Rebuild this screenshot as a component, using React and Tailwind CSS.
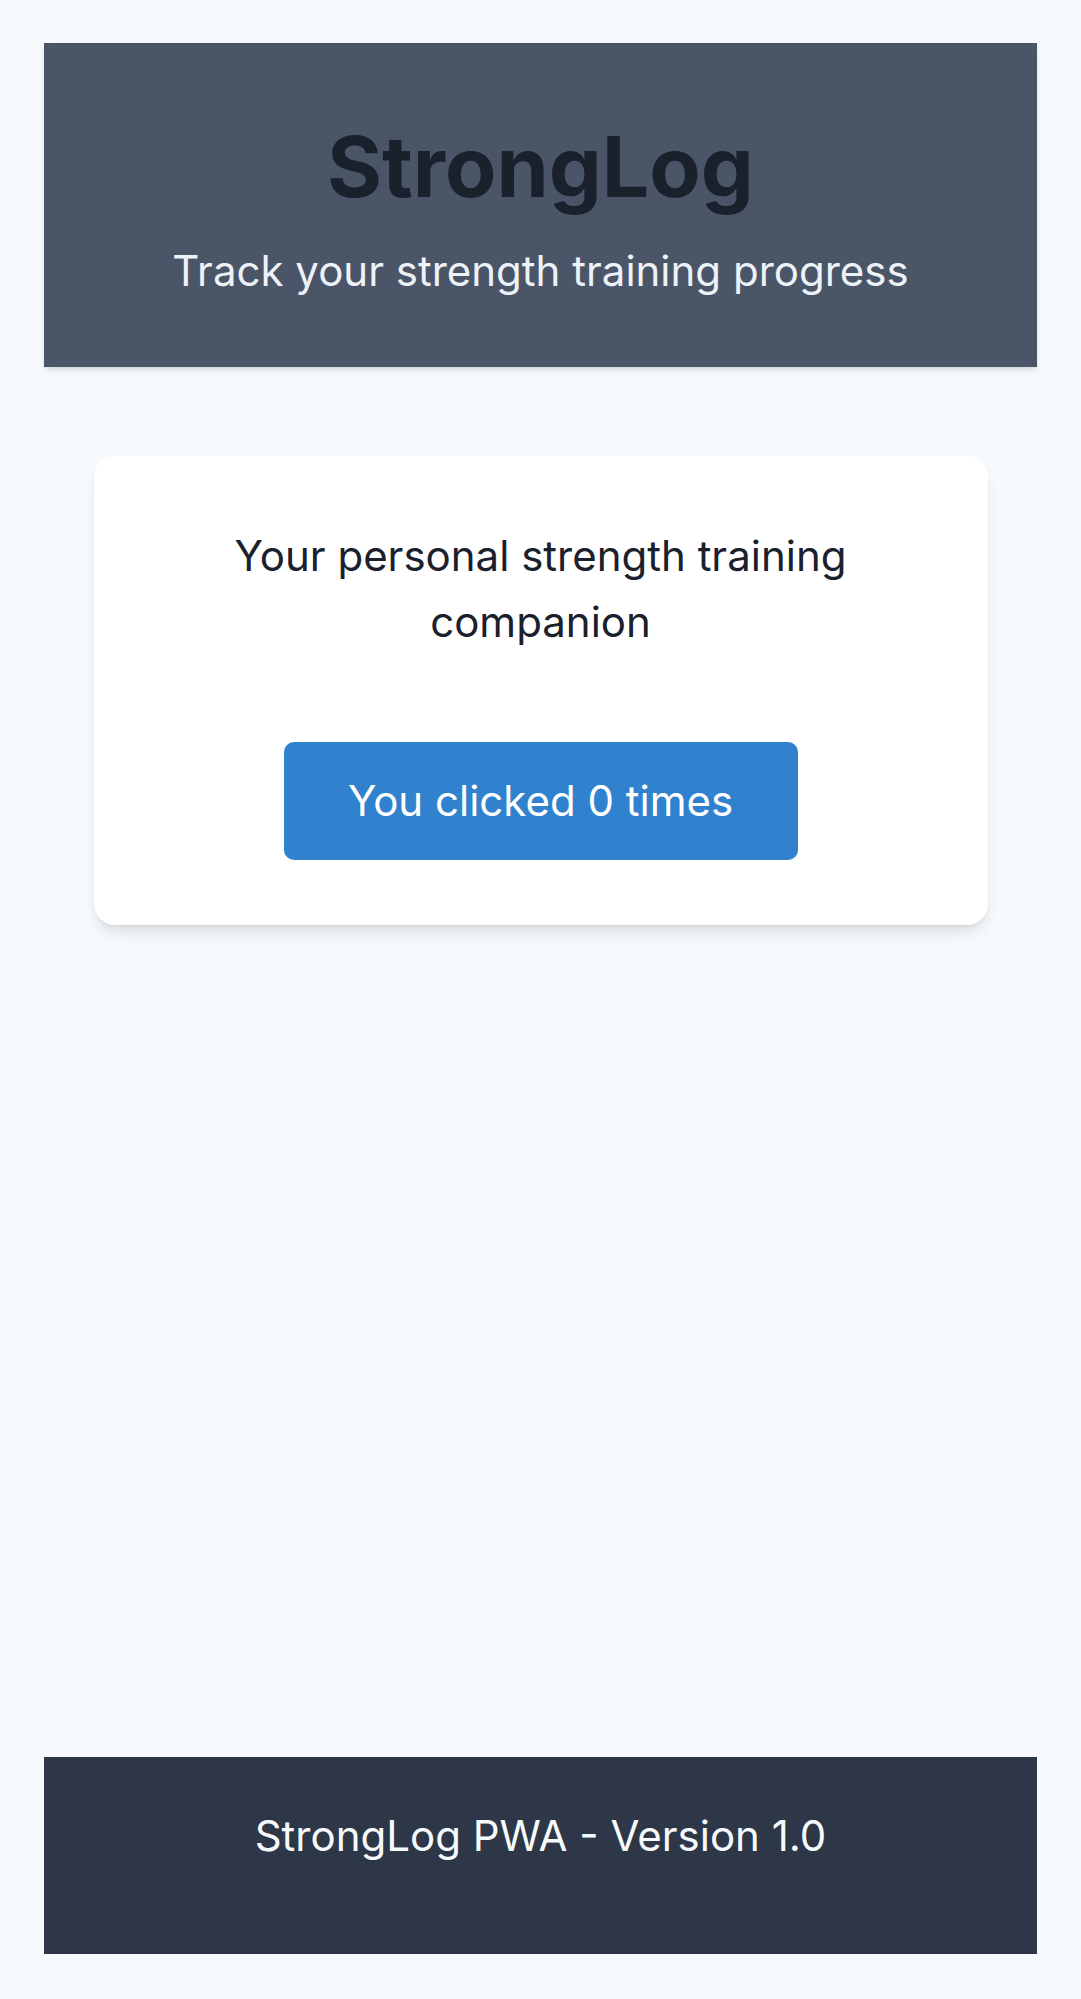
import { useState } from 'react'

export default function App() {
  const [count, setCount] = useState(0)

  return (
    <div
      className="min-h-screen bg-[#f7fafc] flex flex-col px-[44px] pt-[43px] pb-[45px]"
      style={{ fontFamily: 'Inter, "Noto Sans", sans-serif' }}
    >
      <header className="bg-[#4a5568] shadow-md flex flex-col items-center text-center pt-[73px] pb-[62px]">
        <h1 className="text-[#1a202c] font-bold text-[84px] leading-[101px]">StrongLog</h1>
        <p className="text-[#edf2f7] text-[42px] leading-[69px] mt-[19px]">
          Track your strength training progress
        </p>
      </header>

      <main className="flex-1 flex flex-col items-center pt-[89px]">
        <div className="bg-white rounded-[21px] shadow-lg w-[894px] flex flex-col items-center text-center pt-[67px] pb-[65px] px-[60px]">
          <p className="text-[#1a202c] text-[42px] leading-[66px] max-w-[700px]">
            Your personal strength training companion
          </p>
          <button
            onClick={() => setCount(count + 1)}
            className="mt-[87px] bg-[#3182ce] text-white text-[42px] leading-[66px] w-[514px] h-[118px] rounded-[10px]"
          >
            You clicked {count} times
          </button>
        </div>
      </main>

      <footer className="bg-[#2d3748] text-center pt-[44px] pb-[84px]">
        <p className="text-[#f7fafc] text-[42px] leading-[69px]">StrongLog PWA - Version 1.0</p>
      </footer>
    </div>
  )
}
